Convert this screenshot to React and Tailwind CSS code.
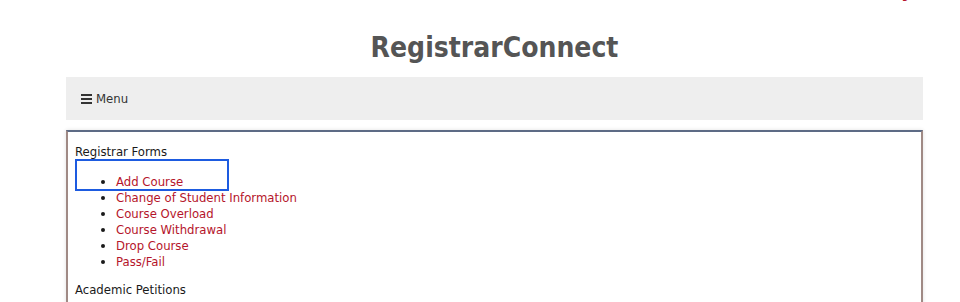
import React from "react";

const forms = [
  "Add Course",
  "Change of Student Information",
  "Course Overload",
  "Course Withdrawal",
  "Drop Course",
  "Pass/Fail",
];

const font = { fontFamily: '"DejaVu Sans Condensed", Tahoma, "DejaVu Sans", sans-serif' };

export default function App() {
  return (
    <div className="relative h-[302px] overflow-hidden bg-white" style={font}>
      {/* clipped account link at the very top */}
      <div className="absolute right-[51px] top-[-16px] text-[13px] text-[#b5152b]">
        Log
      </div>

      <div className="mx-[66px] w-[857px]">
        <h1 className="pt-[29px] pb-[10px] text-center text-[28px] font-bold leading-[38px] text-[#555555]">
          RegistrarConnect
        </h1>

        <div className="flex h-[43px] items-center bg-[#eeeeee] px-[15px] text-[13px] text-[#333333]">
          <span className="mr-[4px] flex flex-col gap-[2px]">
            <span className="block h-[2px] w-[11px] bg-[#333333]" />
            <span className="block h-[2px] w-[11px] bg-[#333333]" />
            <span className="block h-[2px] w-[11px] bg-[#333333]" />
          </span>
          Menu
        </div>

        <div className="mt-[10px] border-x-2 border-t-2 border-x-[#a08a85] border-t-[#5d6b85] bg-white px-[7px] pt-[12px] pb-[20px] text-[13px] leading-[16px] text-[#1a1a1a] shadow-[0_0_4px_rgba(0,0,0,0.12)]">
          <div>Registrar Forms</div>
          <div className="relative">
            <div className="pointer-events-none absolute left-0 top-[-1px] h-[32px] w-[154px] border-2 border-[#1d5be0]" />
            <ul className="list-disc pt-[14px] pl-[41px] marker:text-[#1a1a1a]">
              {forms.map((f) => (
                <li key={f}>
                  <a href="#" className="text-[#b5152b]">
                    {f}
                  </a>
                </li>
              ))}
            </ul>
          </div>
          <div className="mt-[12px]">Academic Petitions</div>
        </div>
      </div>
    </div>
  );
}
